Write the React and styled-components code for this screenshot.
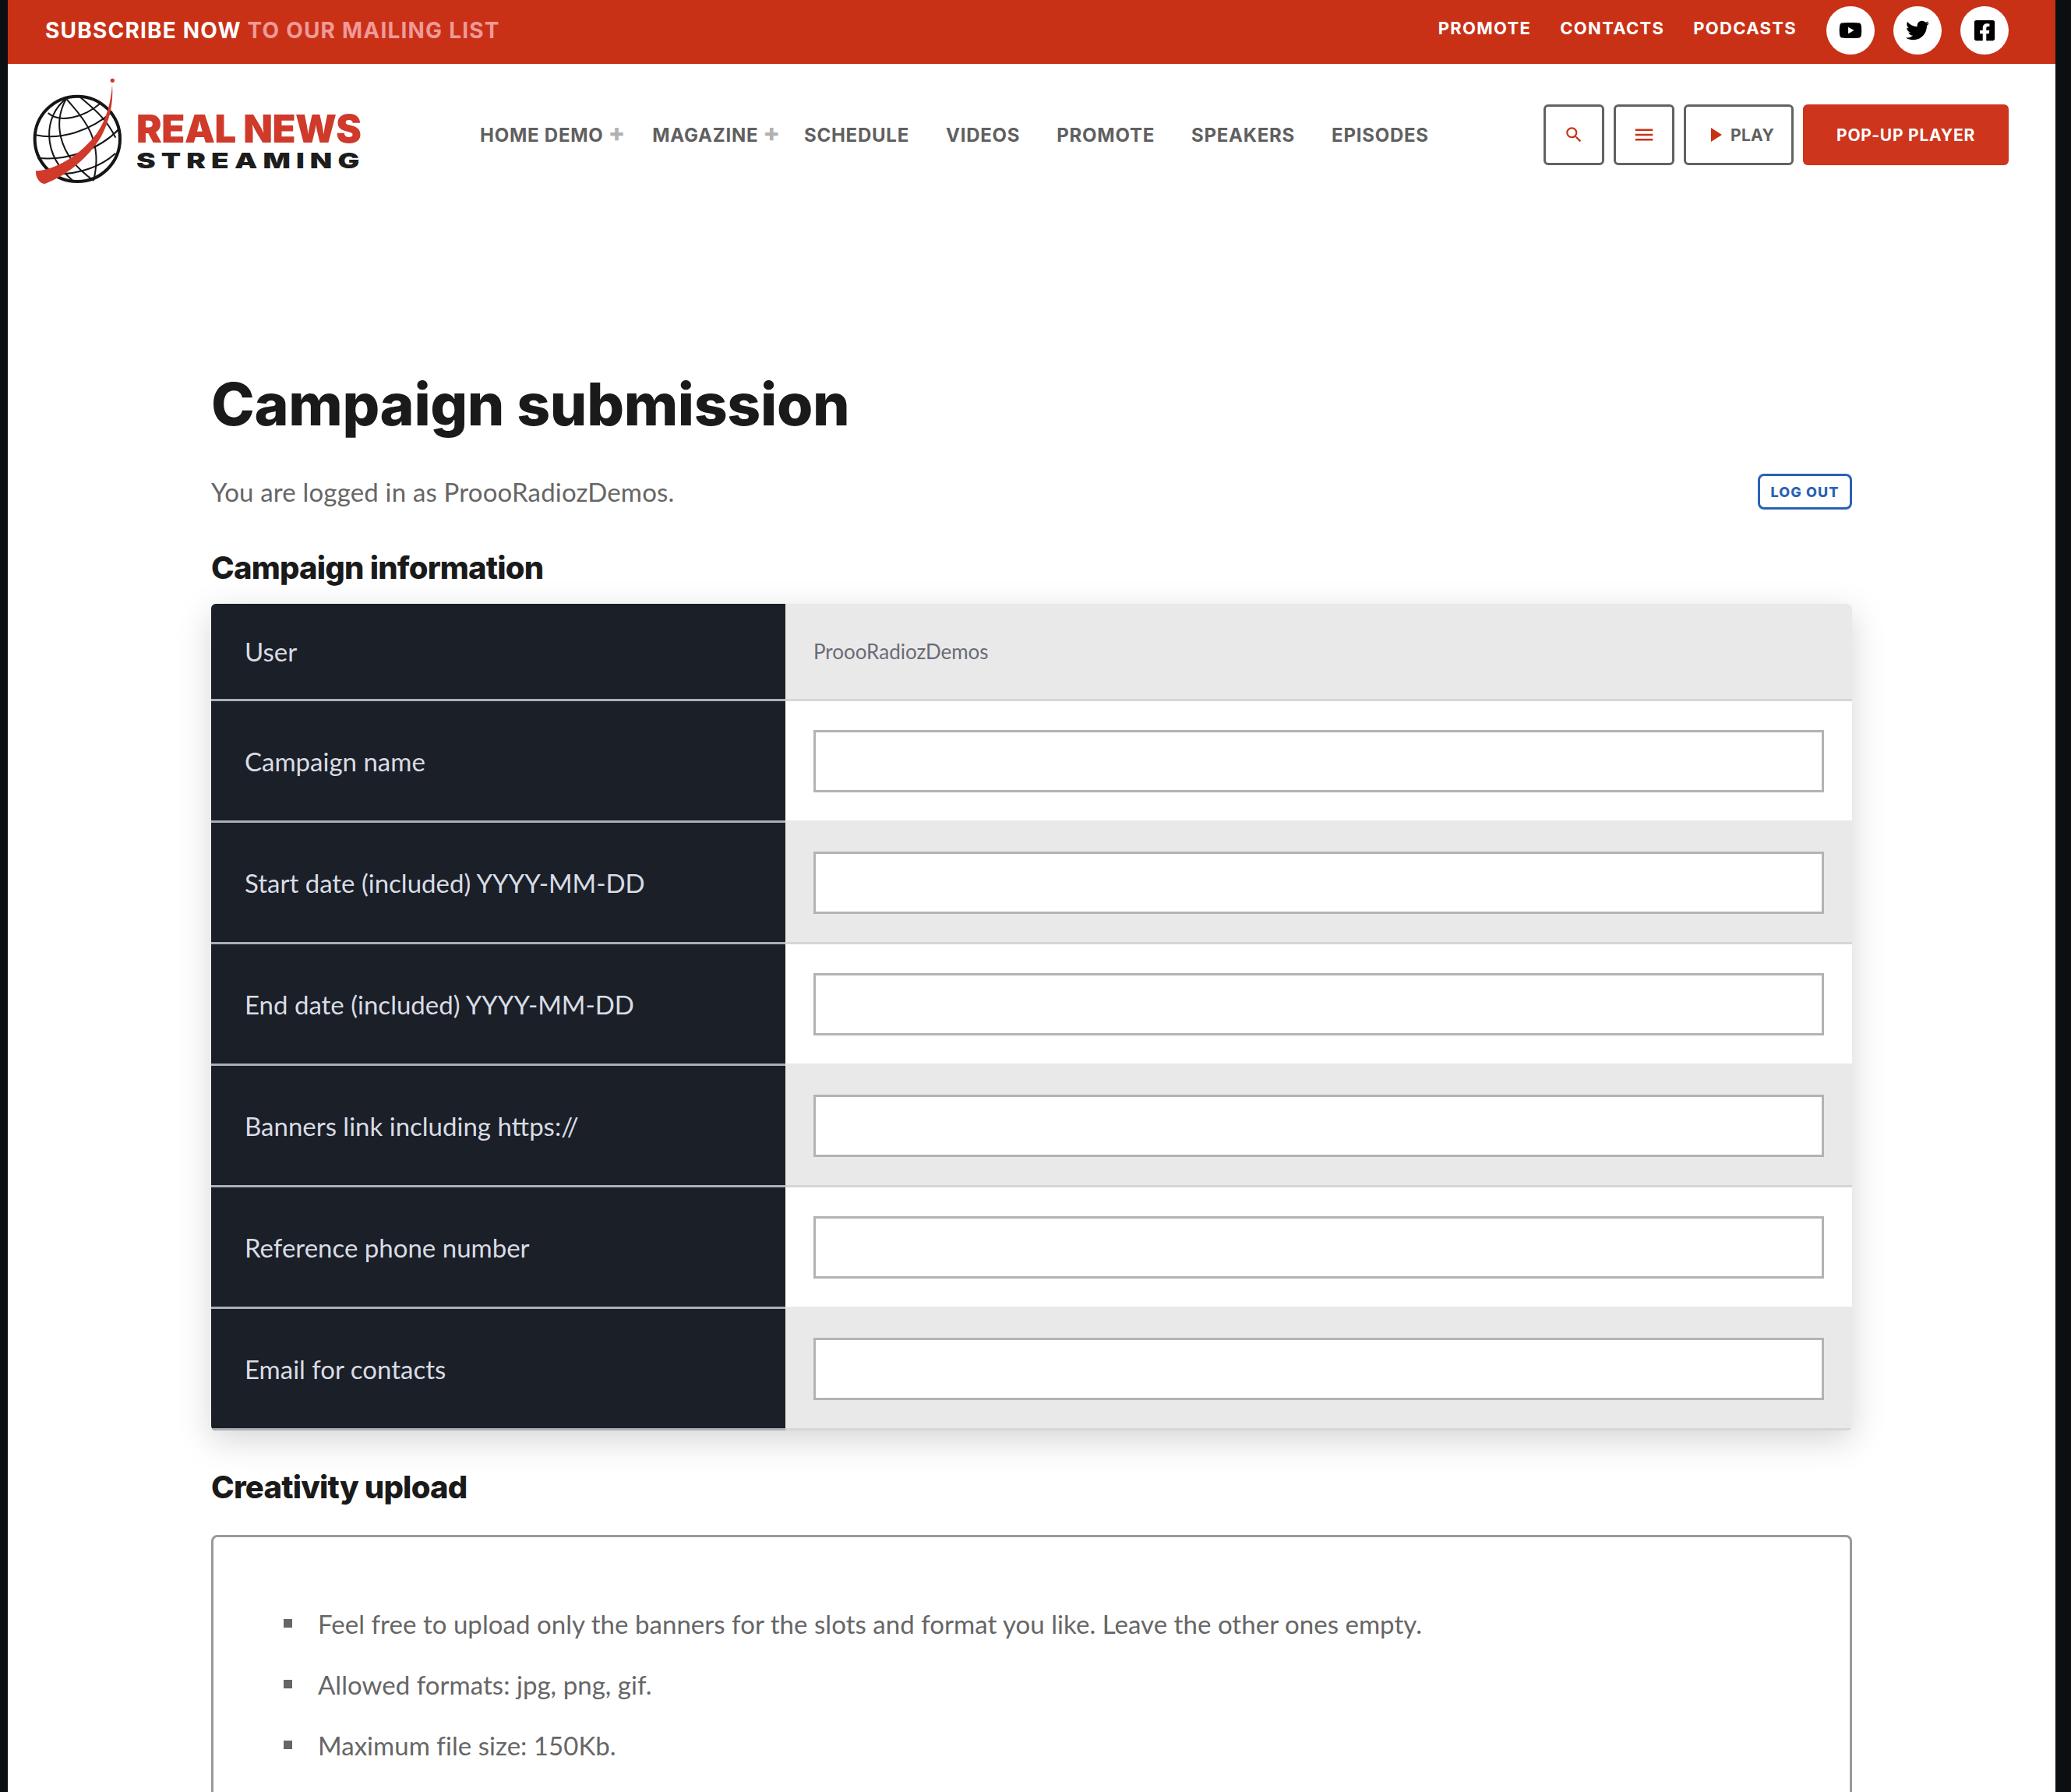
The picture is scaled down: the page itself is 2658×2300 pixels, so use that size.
import React from "react";
import styled, { createGlobalStyle } from "styled-components";
import { FaYoutube, FaTwitter, FaFacebookSquare } from "react-icons/fa";
import { MdSearch, MdMenu } from "react-icons/md";

const RED = "#c93117";
const HEAD_FONT = `"Inter", "Liberation Sans", sans-serif`;
const BODY_FONT = `"Lato", "Noto Sans", sans-serif`;

const FIELDS = [
  "Campaign name",
  "Start date (included) YYYY-MM-DD",
  "End date (included) YYYY-MM-DD",
  "Banners link including https://",
  "Reference phone number",
  "Email for contacts",
];

const GlobalStyle = createGlobalStyle`
  html, body {
    margin: 0;
    padding: 0;
    background: #0c0f12;
    height: 2300px;
    overflow: hidden;
  }
  * {
    box-sizing: border-box;
  }
`;

const Sheet = styled.div`
  margin: 0 20px 0 10px;
  height: 2300px;
  background: #fff;
  overflow: hidden;
  font-family: ${BODY_FONT};
`;

const TopBar = styled.div`
  height: 82px;
  background: ${RED};
  display: flex;
  align-items: center;
  justify-content: space-between;
  padding: 0 60px 4px 48px;
`;

const Subscribe = styled.div`
  font-family: ${HEAD_FONT};
  font-weight: 700;
  font-size: 28px;
  letter-spacing: 1.2px;
  color: #fff;
  span {
    color: #f09a98;
  }
`;

const TopRight = styled.div`
  display: flex;
  align-items: center;
  gap: 38px;
`;

const TopLinks = styled.div`
  display: flex;
  gap: 37px;
  margin-bottom: 6px;
`;

const TopLink = styled.a`
  font-family: ${HEAD_FONT};
  font-weight: 700;
  font-size: 22px;
  letter-spacing: 1.3px;
  color: #fff;
`;

const Socials = styled.div`
  display: flex;
  gap: 24px;
`;

const Social = styled.a`
  width: 62px;
  height: 62px;
  border-radius: 50%;
  background: #fff;
  color: #000;
  display: flex;
  align-items: center;
  justify-content: center;
  font-size: 30px;
`;

const Header = styled.header`
  height: 182px;
  display: flex;
  align-items: flex-start;
  padding: 0 60px 0 10px;
`;

const Logo = styled.div`
  display: flex;
  width: 596px;
  height: 160px;
  margin-top: 8px;
`;

const LogoText = styled.div`
  margin-left: -15px;
  padding-top: 50px;
  font-family: ${HEAD_FONT};
  font-weight: 900;
`;

const LogoTop = styled.div`
  color: #cf3a2b;
  font-size: 49px;
  line-height: 52px;
  letter-spacing: -0.4px;
  white-space: nowrap;
`;

const LogoBottom = styled.div`
  color: #1d1d1d;
  font-size: 27px;
  line-height: 30px;
  letter-spacing: 5.2px;
  white-space: nowrap;
  transform: scaleX(1.37);
  transform-origin: left center;
`;

const Nav = styled.nav`
  display: flex;
  align-items: center;
  height: 78px;
  margin-top: 52px;
  flex: 1;
`;

const NavItem = styled.a`
  font-family: ${HEAD_FONT};
  font-weight: 700;
  font-size: 24px;
  letter-spacing: 0.75px;
  color: #606060;
  white-space: nowrap;
  margin-right: ${(p) => p.$gap}px;
`;

const Plus = styled.span`
  color: #b2b2b2;
  font-size: 32px;
  font-weight: 800;
  line-height: 0;
  margin-left: 6px;
`;

const Actions = styled.div`
  display: flex;
  gap: 12px;
  margin-top: 52px;
`;

const IconButton = styled.button`
  height: 78px;
  width: ${(p) => p.$width || 78}px;
  border: 3px solid #626262;
  border-radius: 6px;
  background: #fff;
  color: ${RED};
  display: flex;
  align-items: center;
  justify-content: center;
  gap: 11px;
  padding: 0 0 0 ${(p) => p.$indent || 0}px;
  font-family: ${HEAD_FONT};
  font-weight: 700;
  font-size: 21px;
  letter-spacing: 0.3px;
  span {
    color: #606060;
  }
`;

const PopupButton = styled.button`
  height: 78px;
  width: 264px;
  border: 0;
  border-radius: 6px;
  background: #cd351d;
  color: #fff;
  font-family: ${HEAD_FONT};
  font-weight: 700;
  font-size: 21px;
  letter-spacing: 0.75px;
`;

const Main = styled.main`
  padding: 0 261px 0 261px;
`;

const Title = styled.h1`
  margin: 211px 0 0;
  font-family: ${HEAD_FONT};
  font-weight: 800;
  font-size: 75px;
  line-height: 88px;
  letter-spacing: -0.35px;
  color: #1a1a1a;
`;

const LoggedRow = styled.div`
  display: flex;
  align-items: center;
  justify-content: space-between;
  margin-top: 45px;
  height: 46px;
  font-size: 33px;
  letter-spacing: 0.18px;
  color: #666;
`;

const LogOut = styled.button`
  width: 121px;
  height: 46px;
  border: 3px solid #2a62b5;
  border-radius: 8px;
  background: #fff;
  color: #2a62b5;
  padding: 0;
  font-family: ${HEAD_FONT};
  font-weight: 800;
  font-size: 18px;
  letter-spacing: 1.1px;
`;

const SectionTitle = styled.h2`
  margin: ${(p) => p.$top}px 0 0;
  font-family: ${HEAD_FONT};
  font-weight: 800;
  font-size: 40px;
  line-height: 48px;
  letter-spacing: -0.8px;
  color: #1a1a1a;
`;

const TableShadow = styled.div`
  box-shadow: 0 12px 44px rgba(0, 0, 0, 0.17);
  border-radius: 6px;
  margin-top: 22px;
`;

const Table = styled.div`
  border-radius: 6px;
  overflow: hidden;
`;

const Row = styled.div`
  display: grid;
  grid-template-columns: 737px 1fr;
  height: ${(p) => (p.$short ? 125 : 156)}px;
  background: ${(p) => (p.$gray ? "#e9e9e9" : "#fff")};
  border-bottom: 3px solid ${(p) => (p.$gray ? "#d6d6d6" : "#e9e9e9")};
`;

const Label = styled.div`
  background: #1b1f28;
  color: #d9dce4;
  display: flex;
  align-items: center;
  padding-left: 43px;
  font-size: 33px;
  margin-bottom: -3px;
  border-bottom: 3px solid #aab0b5;
`;

const Cell = styled.div`
  display: flex;
  align-items: center;
  padding: 0 36px;
`;

const UserName = styled.span`
  font-size: 26px;
  color: #6b6b78;
`;

const Input = styled.input`
  width: 100%;
  height: 80px;
  border: 3px solid #b3b3b3;
  background: #fff;
  border-radius: 0;
  padding: 0 20px;
`;

const UploadBox = styled.div`
  margin-top: 37px;
  height: 600px;
  border: 3px solid #999;
  border-radius: 8px;
  padding: 72px 0 0 90px;
`;

const Notes = styled.ul`
  margin: 0;
  padding: 0;
  list-style: none;
`;

const Note = styled.li`
  position: relative;
  padding-left: 44px;
  height: 78px;
  line-height: 78px;
  font-size: 33px;
  letter-spacing: 0.04px;
  color: #666;
  &::before {
    content: "";
    position: absolute;
    left: 0;
    top: 33px;
    width: 11px;
    height: 11px;
    background: #666;
  }
`;

function Globe() {
  return (
    <svg width="170" height="160" viewBox="0 0 510 480" fill="none">
      <g stroke="#161616" strokeWidth="6">
        <path d="M195 110C110 175 95 320 225 430" />
        <path d="M195 110C235 160 345 250 300 425" />
        <path d="M195 110C150 190 150 320 300 425" />
        <path d="M250 105C300 150 345 180 385 260" />
        <path d="M125 165C170 205 260 185 330 125" />
        <path d="M78 250C170 270 290 235 372 160" />
        <path d="M85 338C190 350 320 310 400 225" />
        <path d="M160 400C250 400 330 370 385 320" />
      </g>
      <circle cx="238" cy="265" r="164" stroke="#161616" strokeWidth="12" />
      <path
        d="M78 388C150 385 250 330 315 240C350 190 368 120 372 55C378 130 360 200 330 255C280 340 190 410 112 438C92 438 76 412 78 388Z"
        fill="#cf3a2b"
      />
      <circle cx="373" cy="40" r="8" fill="#cf3a2b" />
    </svg>
  );
}

function App() {
  return (
    <Sheet>
      <GlobalStyle />
      <TopBar>
        <Subscribe>
          SUBSCRIBE NOW <span>TO OUR MAILING LIST</span>
        </Subscribe>
        <TopRight>
          <TopLinks>
            <TopLink>PROMOTE</TopLink>
            <TopLink>CONTACTS</TopLink>
            <TopLink>PODCASTS</TopLink>
          </TopLinks>
          <Socials>
            <Social>
              <FaYoutube />
            </Social>
            <Social>
              <FaTwitter />
            </Social>
            <Social>
              <FaFacebookSquare />
            </Social>
          </Socials>
        </TopRight>
      </TopBar>

      <Header>
        <Logo>
          <Globe />
          <LogoText>
            <LogoTop>REAL NEWS</LogoTop>
            <LogoBottom>STREAMING</LogoBottom>
          </LogoText>
        </Logo>
        <Nav>
          <NavItem $gap={34}>
            HOME DEMO<Plus>+</Plus>
          </NavItem>
          <NavItem $gap={30}>
            MAGAZINE<Plus>+</Plus>
          </NavItem>
          <NavItem $gap={47}>SCHEDULE</NavItem>
          <NavItem $gap={47}>VIDEOS</NavItem>
          <NavItem $gap={47}>PROMOTE</NavItem>
          <NavItem $gap={47}>SPEAKERS</NavItem>
          <NavItem $gap={0}>EPISODES</NavItem>
        </Nav>
        <Actions>
          <IconButton>
            <MdSearch size={26} />
          </IconButton>
          <IconButton>
            <MdMenu size={30} />
          </IconButton>
          <IconButton $width={141} $indent={10}>
            <svg width="14" height="18" viewBox="0 0 14 18">
              <path d="M0 0L14 9L0 18Z" fill={RED} />
            </svg>
            <span>PLAY</span>
          </IconButton>
          <PopupButton>POP-UP PLAYER</PopupButton>
        </Actions>
      </Header>

      <Main>
        <Title>Campaign submission</Title>
        <LoggedRow>
          You are logged in as ProooRadiozDemos.
          <LogOut>LOG OUT</LogOut>
        </LoggedRow>
        <SectionTitle $top={51}>Campaign information</SectionTitle>
        <TableShadow>
          <Table>
            <Row $short $gray>
              <Label>User</Label>
              <Cell>
                <UserName>ProooRadiozDemos</UserName>
              </Cell>
            </Row>
            {FIELDS.map((name, i) => (
              <Row key={name} $gray={i % 2 === 1}>
                <Label>{name}</Label>
                <Cell>
                  <Input type="text" />
                </Cell>
              </Row>
            ))}
          </Table>
        </TableShadow>
        <SectionTitle $top={49}>Creativity upload</SectionTitle>
        <UploadBox>
          <Notes>
            <Note>
              Feel free to upload only the banners for the slots and format you
              like. Leave the other ones empty.
            </Note>
            <Note>Allowed formats: jpg, png, gif.</Note>
            <Note>Maximum file size: 150Kb.</Note>
          </Notes>
        </UploadBox>
      </Main>
    </Sheet>
  );
}

export default App;
